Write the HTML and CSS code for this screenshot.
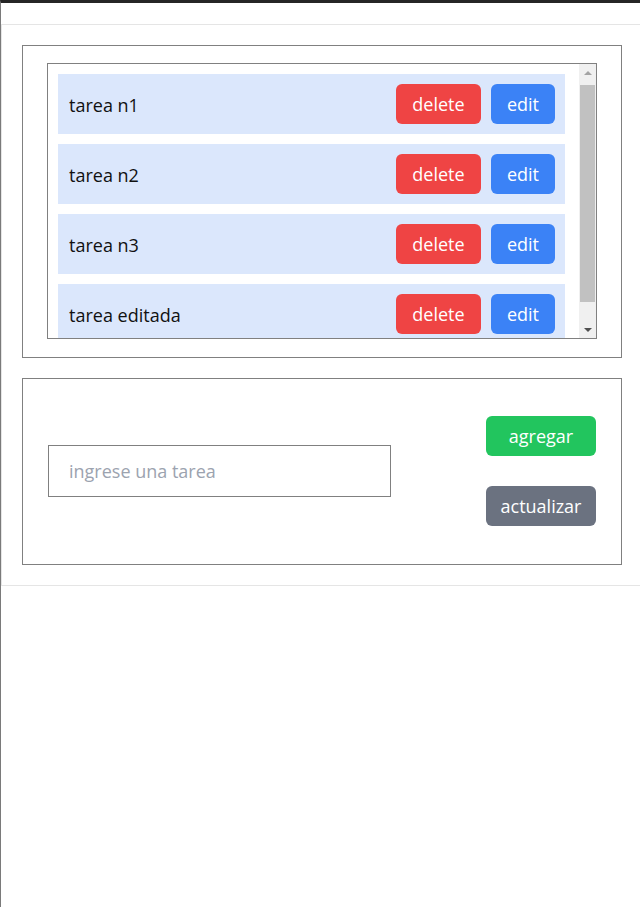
FILE: index.html
```html
<!DOCTYPE html>
<html lang="es">
<head>
<meta charset="utf-8">
<title>Tareas</title>
<link rel="stylesheet" href="styles.css">
</head>
<body>
<div class="frame">
  <main class="app">
    <section class="panel panel-list">
      <div class="list-box">
        <ul class="list">
          <li class="item"><span class="item-text">tarea n1</span><div class="actions"><button class="btn btn-delete">delete</button><button class="btn btn-edit">edit</button></div></li>
          <li class="item"><span class="item-text">tarea n2</span><div class="actions"><button class="btn btn-delete">delete</button><button class="btn btn-edit">edit</button></div></li>
          <li class="item"><span class="item-text">tarea n3</span><div class="actions"><button class="btn btn-delete">delete</button><button class="btn btn-edit">edit</button></div></li>
          <li class="item"><span class="item-text">tarea editada</span><div class="actions"><button class="btn btn-delete">delete</button><button class="btn btn-edit">edit</button></div></li>
        </ul>
        <div class="scrollbar" aria-hidden="true">
          <div class="sb-btn"><span class="arrow arrow-up"></span></div>
          <div class="sb-track"><div class="sb-thumb"></div></div>
          <div class="sb-btn"><span class="arrow arrow-down"></span></div>
        </div>
      </div>
    </section>
    <section class="panel panel-form">
      <input class="task-input" type="text" placeholder="ingrese una tarea">
      <div class="form-actions">
        <button class="btn btn-add">agregar</button>
        <button class="btn btn-update">actualizar</button>
      </div>
    </section>
  </main>
</div>
</body>
</html>
```
FILE: styles.css
```css
* { box-sizing: border-box; }
html, body { margin: 0; padding: 0; background: #fff; }
body {
  font-family: "Open Sans", "Noto Sans", sans-serif;
  font-size: 18px;
  color: #111;
  overflow: hidden;
}
.frame {
  border-top: 3px solid #262626;
  border-left: 1px solid #7a7a7a;
  min-height: 907px;
  padding-top: 21px;
}
.app {
  width: 660px;
  border: 1px solid #e5e5e5;
  padding: 20px;
  display: flex;
  flex-direction: column;
  gap: 20px;
}
.panel {
  width: 600px;
  border: 1px solid #808080;
}
.panel-list {
  padding: 17px 24px 18px;
}
.list-box {
  width: 550px;
  height: 276px;
  border: 1px solid #808080;
  display: flex;
  overflow: hidden;
}
.list {
  flex: 1;
  list-style: none;
  margin: 0;
  overflow: hidden;
  padding: 10px 14px 10px 10px;
  display: flex;
  flex-direction: column;
  gap: 10px;
}
.item {
  flex: 0 0 60px;
  background: #dbe7fc;
  display: flex;
  align-items: center;
  justify-content: space-between;
  padding: 10px 10px 10px 11px;
}
.item-text { line-height: 24px; padding-top: 1px; }
.actions { display: flex; gap: 10px; }
.btn {
  font-family: inherit;
  font-size: 18px;
  color: #fff;
  border: none;
  border-radius: 6px;
  height: 40px;
  padding: 0;
  cursor: pointer;
}
.btn-delete { background: #ef4444; width: 85px; }
.btn-edit { background: #3b82f6; width: 64px; }

.scrollbar {
  flex: 0 0 17px;
  background: #f0f0f0;
  display: flex;
  flex-direction: column;
}
.sb-btn {
  flex: 0 0 17px;
  display: flex;
  align-items: center;
  justify-content: center;
}
.arrow {
  width: 0;
  height: 0;
  border-left: 4px solid transparent;
  border-right: 4px solid transparent;
}
.arrow-up { border-bottom: 4px solid #a3a3a3; }
.arrow-down { border-top: 4px solid #505050; }
.sb-track {
  flex: 1;
  padding: 4px 1px 19px;
  display: flex;
  flex-direction: column;
}
.sb-thumb {
  flex: 1;
  background: #c1c1c1;
}

.panel-form {
  padding: 37px 25px 38px 25px;
  display: flex;
  align-items: center;
  justify-content: space-between;
}
.task-input {
  width: 343px;
  height: 52px;
  border: 1px solid #808080;
  padding: 0 20px;
  font-family: inherit;
  font-size: 18px;
  color: #111;
  outline: none;
}
.task-input::placeholder { color: #9ca3af; }
.form-actions {
  display: flex;
  flex-direction: column;
  gap: 30px;
}
.btn-add { background: #22c55e; width: 110px; }
.btn-update { background: #6b7280; width: 110px; }
```
